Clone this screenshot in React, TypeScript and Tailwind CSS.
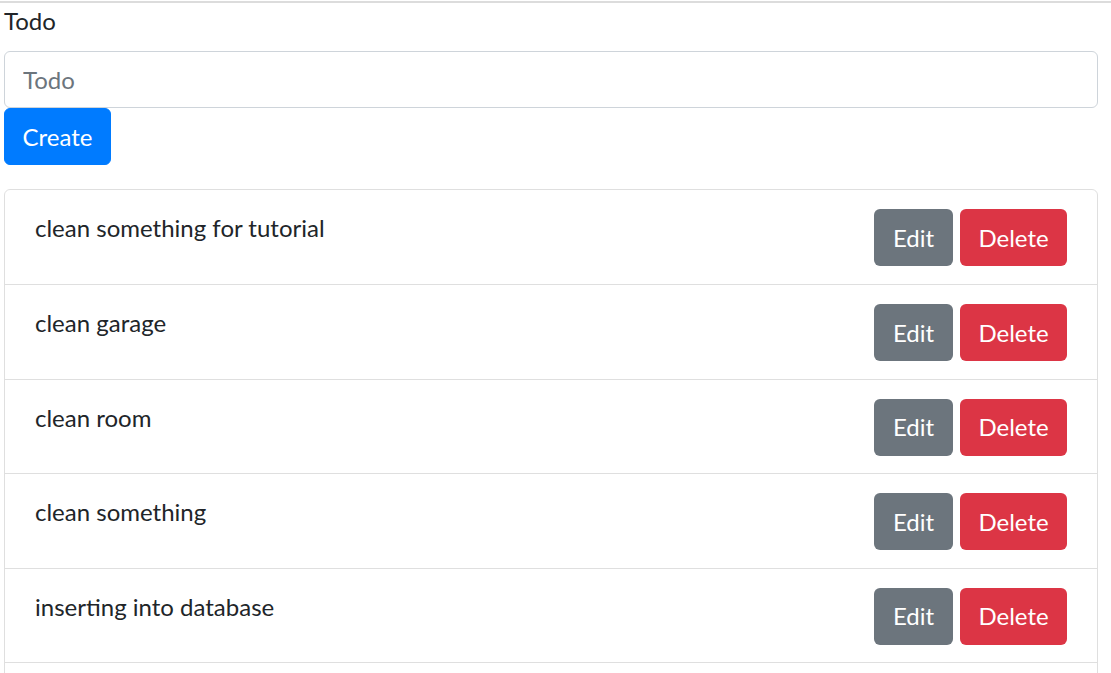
import React from "react";

const todos = [
  "clean something for tutorial",
  "clean garage",
  "clean room",
  "clean something",
  "inserting into database",
];

export default function App() {
  return (
    <div className="min-h-screen bg-white font-['Lato','Noto_Sans',sans-serif] text-[24px] leading-[36px] text-[#212529]">
      <div className="pt-[1px]">
        <div className="h-[2px] bg-[#dcdcdc]" />
      </div>
      <div className="ml-[4px] w-[1094px]">
        <label className="block mb-[12px]">Todo</label>
        <input
          type="text"
          placeholder="Todo"
          className="block w-full h-[57px] px-[18px] py-[9px] border border-[#ced4da] rounded-[6px] text-[24px] leading-[36px] text-[#495057] placeholder:text-[#6c757d] outline-none"
        />
        <button className="block w-[107px] h-[57px] rounded-[6px] bg-[#007bff] border border-[#007bff] text-white text-[24px] leading-[36px]">
          Create
        </button>
        <ul className="mt-[24px] border border-[rgba(0,0,0,0.125)] rounded-[6px] overflow-hidden">
          {todos.map((t, i) => (
            <li
              key={i}
              className={`flex items-start justify-between h-[94.4px] px-[30px] pt-[18px] ${
                i > 0 ? "border-t border-[rgba(0,0,0,0.125)]" : ""
              }`}
            >
              <span className="pt-[2px]">{t}</span>
              <div className="flex gap-[7px] pt-[1px]">
                <button className="w-[79px] h-[57px] rounded-[6px] bg-[#6c757d] text-white text-[24px] leading-[36px]">
                  Edit
                </button>
                <button className="w-[107px] h-[57px] rounded-[6px] bg-[#dc3545] text-white text-[24px] leading-[36px]">
                  Delete
                </button>
              </div>
            </li>
          ))}
          <li className="h-[94.4px] border-t border-[rgba(0,0,0,0.125)]" />
        </ul>
      </div>
    </div>
  );
}
